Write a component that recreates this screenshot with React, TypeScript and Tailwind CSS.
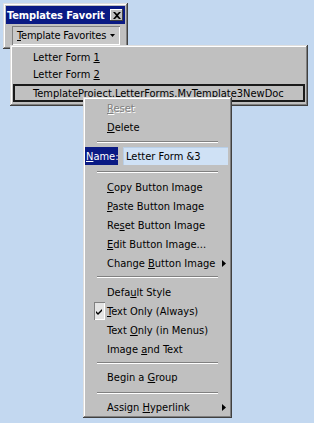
import React from "react";

const raised =
  "shadow-[inset_-1px_-1px_0_#404040,inset_1px_1px_0_#dfdfdf,inset_-2px_-2px_0_#808080,inset_2px_2px_0_#ffffff]";

function Arrow() {
  return (
    <svg width="4" height="7" viewBox="0 0 4 7" className="absolute right-[6px] top-[6px]">
      <path d="M0 0 L4 3.5 L0 7 Z" fill="#000" />
    </svg>
  );
}

function Item({
  children,
  arrow,
  disabled,
  checked,
}: {
  children: React.ReactNode;
  arrow?: boolean;
  disabled?: boolean;
  checked?: boolean;
}) {
  return (
    <div className="relative h-[19px] flex items-center pl-[24px] whitespace-nowrap">
      {checked && (
        <div className="absolute left-[11px] top-[0px] w-[11px] h-[18px] bg-[#e4e4e4] shadow-[inset_1px_1px_0_#808080,inset_-1px_-1px_0_#ffffff] flex items-center justify-center">
          <svg width="7" height="7" viewBox="0 0 7 7">
            <path d="M0 3 L2 5 L6 1 L6 3 L2 7 L0 5 Z" fill="#000" />
          </svg>
        </div>
      )}
      <span
        className={
          disabled
            ? "text-[#808080] [text-shadow:1px_1px_0_#ffffff]"
            : "text-black"
        }
      >
        {children}
      </span>
      {arrow && <Arrow />}
    </div>
  );
}

function Sep({ h, t }: { h: string; t: string }) {
  return (
    <div className={`${h} ${t} px-[14px]`}>
      <div className="h-px bg-[#808080]" />
      <div className="h-px bg-white" />
    </div>
  );
}

export default function App() {
  return (
    <div className="relative w-[314px] h-[423px] overflow-hidden bg-[#c3d8f0] text-[11px] leading-[13px] font-[family-name:'DejaVu_Sans_Condensed','DejaVu_Sans',sans-serif] text-black">
      {/* Floating toolbar window */}
      <div className={`absolute left-[3px] top-[3px] w-[125px] h-[46px] bg-[#c0c0c0] ${raised} p-[3px]`}>
        <div className="h-[18px] bg-[#0a1a84] flex items-center justify-between pl-[1px] pr-[2px] overflow-hidden">
          <span className="text-white font-bold text-[11px] tracking-[-0.1px] whitespace-nowrap">Templates Favorit</span>
          <div className="shrink-0 w-[13px] h-[12px] bg-[#c0c0c0] shadow-[inset_-1px_-1px_0_#404040,inset_1px_1px_0_#ffffff] flex items-center justify-center">
            <svg width="8" height="7" viewBox="0 0 8 7">
              <path d="M0 0 L2 0 L4 2 L6 0 L8 0 L5 3.5 L8 7 L6 7 L4 5 L2 7 L0 7 L3 3.5 Z" fill="#000" />
            </svg>
          </div>
        </div>
        <div className="mt-[2px] ml-[6px] w-[108px] h-[19px] bg-[#c8c8c8] shadow-[inset_1px_1px_0_#808080,inset_-1px_-1px_0_#ffffff] flex items-center pl-[5px] pr-[5px] whitespace-nowrap">
          <span className="tracking-[-0.2px]">
            <u>T</u>emplate Favorites
          </span>
          <svg width="5" height="3" viewBox="0 0 5 3" className="ml-auto shrink-0">
            <path d="M0 0 L5 0 L2.5 3 Z" fill="#000" />
          </svg>
        </div>
      </div>

      {/* Dropdown menu */}
      <div className={`absolute left-[10px] top-[45px] w-[298px] h-[61px] bg-[#c0c0c0] ${raised} pt-[4px] px-[3px] whitespace-nowrap`}>
        <div className="h-[17px] flex items-center pl-[20px]">
          <span>
            Letter Form <u>1</u>
          </span>
        </div>
        <div className="h-[17px] flex items-center pl-[20px]">
          <span>
            Letter Form <u>2</u>
          </span>
        </div>
        <div className="mt-[1px] h-[18px] border-2 border-[#1a1a1a] flex items-center pl-[18px]">
          <span>TemplateProject.LetterForms.MyTemplate3NewDoc</span>
        </div>
      </div>

      {/* Context menu */}
      <div className={`absolute left-[83px] top-[97px] w-[149px] h-[321px] bg-[#c0c0c0] ${raised} pt-[2px]`}>
        <Item disabled>
          <u>R</u>eset
        </Item>
        <Item>
          <u>D</u>elete
        </Item>
        <Sep h="h-[10px]" t="pt-[4px]" />
        <div className="h-[19px] flex items-start pl-[2px] whitespace-nowrap">
          <div className="h-[18px] w-[33px] bg-[#0a1a84] text-white flex items-center pl-[1px]">
            <span>
              <u>N</u>ame:
            </span>
          </div>
          <div className="ml-[5px] h-[18px] w-[105px] bg-[#cfe1f5] flex items-center pl-[3px] shadow-[inset_1px_1px_0_#b8cfe8]">
            <span>Letter Form &amp;3</span>
          </div>
        </div>
        <Sep h="h-[12px]" t="pt-[5px]" />
        <Item>
          <u>C</u>opy Button Image
        </Item>
        <Item>
          <u>P</u>aste Button Image
        </Item>
        <Item>
          Re<u>s</u>et Button Image
        </Item>
        <Item>
          <u>E</u>dit Button Image...
        </Item>
        <Item arrow>
          Change <u>B</u>utton Image
        </Item>
        <Sep h="h-[10px]" t="pt-[3px]" />
        <Item>
          Defa<u>u</u>lt Style
        </Item>
        <Item checked>
          <u>T</u>ext Only (Always)
        </Item>
        <Item>
          Text <u>O</u>nly (in Menus)
        </Item>
        <Item>
          Image <u>a</u>nd Text
        </Item>
        <Sep h="h-[9px]" t="pt-[3px]" />
        <Item>
          Begin a <u>G</u>roup
        </Item>
        <Sep h="h-[11px]" t="pt-[5px]" />
        <Item arrow>
          Assign <u>H</u>yperlink
        </Item>
      </div>
    </div>
  );
}
